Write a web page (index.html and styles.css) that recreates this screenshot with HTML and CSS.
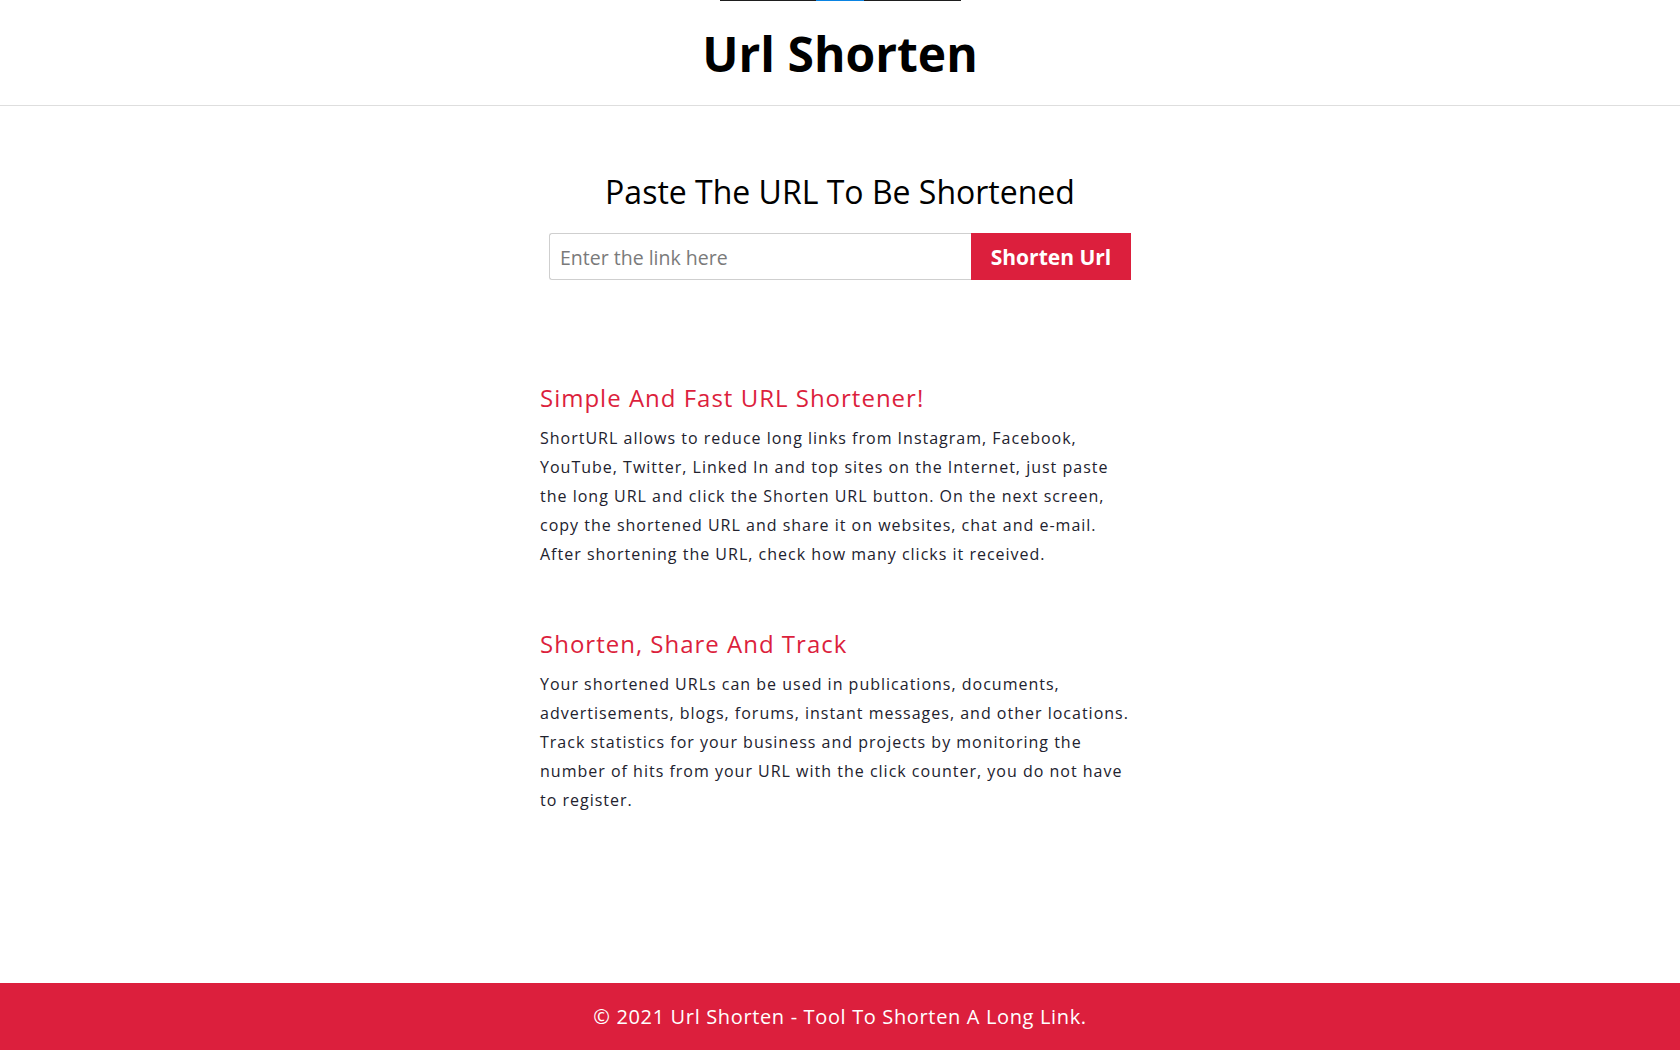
FILE: index.html
```html
<!DOCTYPE html>
<html lang="en">
<head>
<meta charset="utf-8">
<title>Url Shorten</title>
<link rel="stylesheet" href="styles.css">
</head>
<body>
<div class="page">
  <header class="site-header">
    <div class="topbar"><span class="topbar-thumb"></span></div>
    <h1 class="brand">Url Shorten</h1>
  </header>
  <main class="main">
    <section class="shorten">
      <h2 class="shorten-title">Paste The URL To Be Shortened</h2>
      <form class="shorten-form">
        <input class="shorten-input" type="text" placeholder="Enter the link here">
        <button class="shorten-btn" type="button">Shorten Url</button>
      </form>
    </section>
    <section class="info">
      <article class="info-block">
        <h3 class="info-title">Simple And Fast URL Shortener!</h3>
        <p class="info-text">ShortURL allows to reduce long links from Instagram, Facebook, YouTube, Twitter, Linked In and top sites on the Internet, just paste the long URL and click the Shorten URL button. On the next screen, copy the shortened URL and share it on websites, chat and e-mail. After shortening the URL, check how many clicks it received.</p>
      </article>
      <article class="info-block">
        <h3 class="info-title">Shorten, Share And Track</h3>
        <p class="info-text">Your shortened URLs can be used in publications, documents, advertisements, blogs, forums, instant messages, and other locations. Track statistics for your business and projects by monitoring the number of hits from your URL with the click counter, you do not have to register.</p>
      </article>
    </section>
  </main>
  <footer class="site-footer">© 2021 Url Shorten - Tool To Shorten A Long Link.</footer>
</div>
</body>
</html>
```
FILE: styles.css
```css
* { box-sizing: border-box; }
html, body { margin: 0; padding: 0; }
body {
  font-family: "Open Sans", "Liberation Sans", sans-serif;
  color: #000;
  background: #fff;
}
.page {
  min-height: 1050px;
  display: flex;
  flex-direction: column;
}
.site-header {
  height: 106px;
  border-bottom: 1px solid #dedede;
  display: flex;
  flex-direction: column;
  align-items: center;
}
.topbar {
  width: 241px;
  height: 1px;
  background: #1e1e1e;
  display: flex;
  justify-content: center;
}
.topbar-thumb {
  width: 48px;
  height: 1px;
  background: #0a84e3;
}
.brand {
  margin: 22px 0 0;
  font-size: 48px;
  font-weight: 700;
  line-height: 62px;
}
.main {
  flex: 1;
  width: 600px;
  margin: 0 auto;
}
.shorten {
  padding-top: 64px;
  display: flex;
  flex-direction: column;
  align-items: center;
}
.shorten-title {
  margin: 0;
  font-size: 32px;
  font-weight: 400;
  line-height: 44px;
}
.shorten-form {
  margin-top: 19px;
  display: flex;
  width: 582px;
  height: 47px;
}
.shorten-input {
  flex: 1;
  height: 47px;
  border: 1px solid #cfcfcf;
  border-right: none;
  border-radius: 3px 0 0 3px;
  padding: 1px 10px 0;
  font-family: inherit;
  font-size: 19.5px;
  color: #333;
  outline: none;
}
.shorten-input::placeholder { color: #7a7a7a; }
.shorten-btn {
  width: 160px;
  height: 47px;
  border: none;
  background: #dc1f3d;
  color: #fff;
  font-family: inherit;
  font-size: 21px;
  font-weight: 700;
  padding: 0;
}
.info {
  padding-top: 101px;
}
.info-block + .info-block { margin-top: 58px; }
.info-title {
  margin: 0;
  color: #dc1f3d;
  font-size: 24px;
  font-weight: 400;
  letter-spacing: 1px;
  line-height: 34px;
}
.info-text {
  margin: 9px 0 0;
  font-size: 16px;
  line-height: 29px;
  letter-spacing: 1px;
  color: #22222e;
}
.site-footer {
  height: 67px;
  background: #dc1f3d;
  color: #fff;
  font-size: 20px;
  letter-spacing: 0.65px;
  display: flex;
  align-items: center;
  justify-content: center;
}
```
